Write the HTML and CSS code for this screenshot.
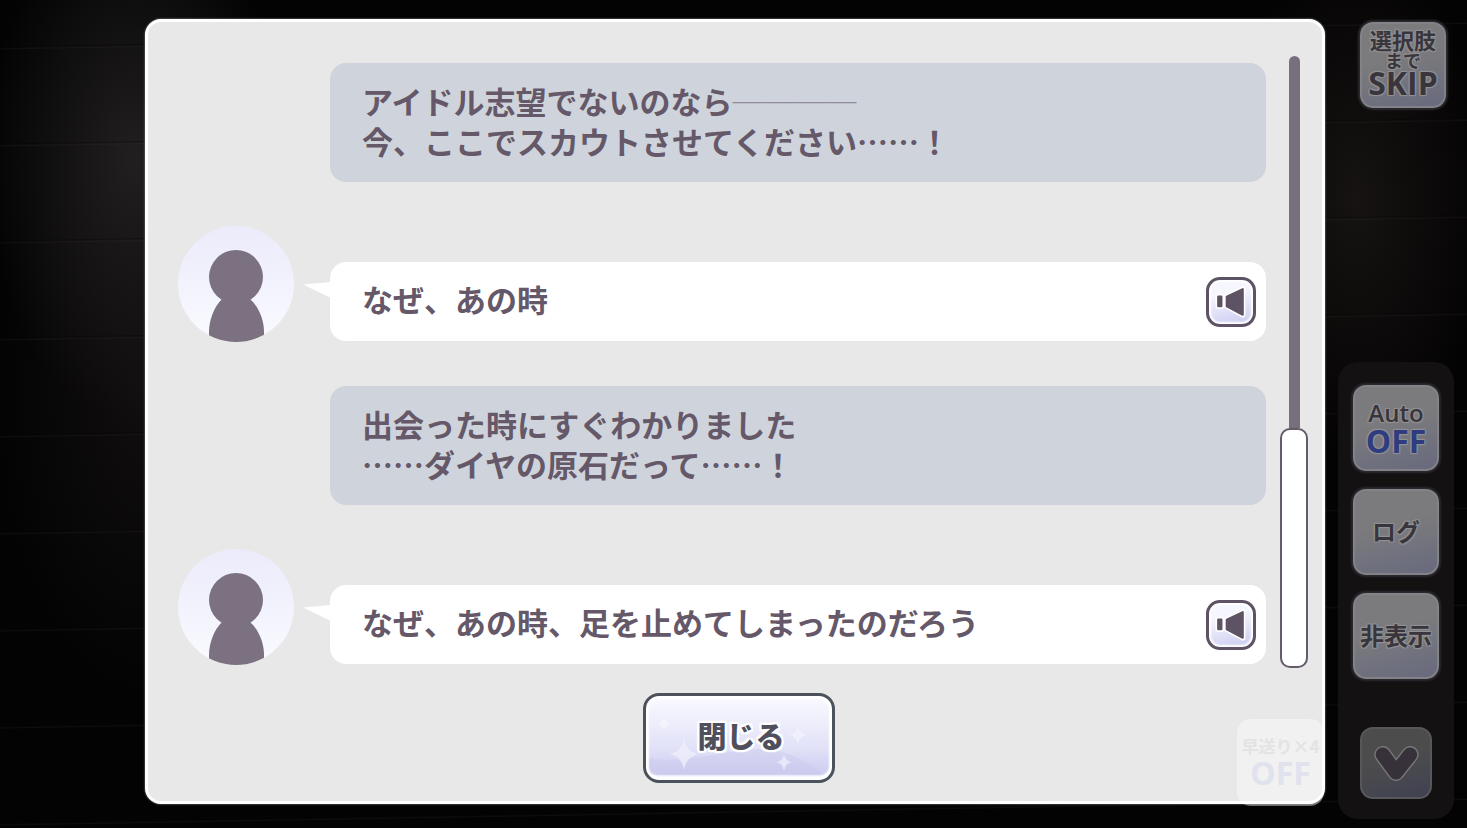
FILE: index.html
```
<!DOCTYPE html>
<html lang="ja">
<head>
  <meta charset="UTF-8" />
  <meta name="viewport" content="width=device-width, initial-scale=1.0">
  <title>ログ</title>
  <link rel="stylesheet" href="styles.css">
</head>
<body>

  <div class="stage">

    <!-- Log window -->
    <main class="panel">
      <div class="log">
        <div class="log-list">
          <div class="narration">
            <p>アイドル志望でないのなら<span class="dash">────</span><br>今、ここでスカウトさせてください……！</p>
          </div>

          <div class="speech">
            <svg class="avatar" viewBox="0 0 116 116" aria-hidden="true">
              <use href="#person" />
            </svg>
            <div class="bubble">
              <p>なぜ、あの時</p>
              <button class="voice" aria-label="音声再生"><svg viewBox="0 0 30 30"><use href="#speaker" /></svg></button>
            </div>
          </div>

          <div class="narration">
            <p>出会った時にすぐわかりました<br>……ダイヤの原石だって……！</p>
          </div>

          <div class="speech">
            <svg class="avatar" viewBox="0 0 116 116" aria-hidden="true">
              <use href="#person" />
            </svg>
            <div class="bubble">
              <p>なぜ、あの時、足を止めてしまったのだろう</p>
              <button class="voice" aria-label="音声再生"><svg viewBox="0 0 30 30"><use href="#speaker" /></svg></button>
            </div>
          </div>
        </div>

        <div class="scrollbar">
          <div class="track"></div>
          <div class="thumb"></div>
        </div>
      </div>

      <div class="footer">
        <button class="close">
          <svg class="sparkles" viewBox="0 0 186 84" preserveAspectRatio="none" aria-hidden="true">
            <path d="M3 62C45 70 90 48 130 54Q158 62 178 79H8Q3 79 3 70Z" fill="#c6c5ec" opacity=".35" />
            <path d="M38 42Q40 55 52 58Q40 61 38 74Q36 61 24 58Q36 55 38 42Z" fill="#eeeefc" opacity=".8" />
            <path d="M138 58Q139 65 146 66Q139 67 138 75Q137 67 130 66Q137 65 138 58Z" fill="#eeeefc" opacity=".8" />
            <path d="M152 30Q153 38 161 39Q153 40 152 49Q151 40 143 39Q151 38 152 30Z" fill="#fff" opacity=".4" />
            <path d="M18 21Q19 27 25 28Q19 29 18 35Q17 29 11 28Q17 27 18 21Z" fill="#fff" opacity=".4" />
          </svg>
          <span>閉じる</span>
        </button>
      </div>

      <button class="fast">
        <span class="fast-label">早送り×4</span>
        <span class="fast-state">OFF</span>
      </button>
    </main>

    <!-- Side buttons -->
    <aside class="side">
      <button class="key skip">
        <span class="skip-top">選択肢</span>
        <span class="skip-mid">まで</span>
        <span class="skip-word">SKIP</span>
      </button>

      <div class="drawer">
        <button class="key">
          <span class="auto">Auto</span>
          <span class="state">OFF</span>
        </button>
        <button class="key"><span class="word">ログ</span></button>
        <button class="key"><span class="word">非表示</span></button>
        <button class="key fold" aria-label="たたむ">
          <svg viewBox="0 0 72 72">
            <path d="M22 27L36 46L51 27" fill="none" stroke="#77777a" stroke-width="18" stroke-linecap="round" stroke-linejoin="round" />
            <path d="M22 27L36 46L51 27" fill="none" stroke="#373239" stroke-width="15" stroke-linecap="round" stroke-linejoin="round" />
          </svg>
        </button>
      </div>
    </aside>

  </div>

  <svg class="defs" width="0" height="0" aria-hidden="true">
    <defs>
      <linearGradient id="sky" x1="0" y1="0" x2="0" y2="1">
        <stop offset="0" stop-color="#ebebfb" />
        <stop offset="1" stop-color="#fafaff" />
      </linearGradient>
      <clipPath id="round"><circle cx="58" cy="58" r="58" /></clipPath>
      <symbol id="person" viewBox="0 0 116 116">
        <circle cx="58" cy="58" r="58" fill="url(#sky)" />
        <g fill="#7b7180" clip-path="url(#round)">
          <circle cx="58" cy="51" r="27" />
          <path d="M44 73H72C81 81 86 94 86 106V116H31V106C31 94 36 81 44 73Z" />
        </g>
      </symbol>
      <symbol id="speaker" viewBox="0 0 30 30">
        <path d="M3 10H6V19H3ZM11 10L26 3V27L11 19Z" fill="#5e5365" stroke="#fff" stroke-width="5" stroke-linejoin="round" />
        <path d="M3 10H6V19H3ZM11 10L26 3V27L11 19Z" fill="#5e5365" stroke="#5e5365" stroke-width="2" stroke-linejoin="round" />
      </symbol>
    </defs>
  </svg>

</body>
</html>
```
FILE: styles.css
```
* {
  box-sizing: border-box;
}

body {
  margin: 0;
  font-family: "Noto Sans CJK JP", sans-serif;
  color: #655868;
  background: #040303;
}

p {
  margin: 0;
}

button {
  font-family: inherit;
  font-weight: bold;
  padding: 0;
  border: none;
  cursor: pointer;
}

.defs {
  position: absolute;
}

.stage {
  display: grid;
  grid-template-columns: 1fr 142px;
  align-items: start;
  min-height: 100vh;
  padding-left: 145px;
  background:
    repeating-linear-gradient(179deg, transparent 0 46px, rgba(0,0,0,0.3) 47px, rgba(80,72,70,0.12) 49px, transparent 50px 97px),
    radial-gradient(ellipse 150px 260px at 135px 160px, #211f20, transparent),
    radial-gradient(ellipse 150px 300px at 145px 400px, #100e0f, transparent),
    radial-gradient(ellipse 130px 260px at calc(100% - 110px) 200px, #161312, transparent),
    #040303;
}

/* Log window */
.panel {
  position: relative;
  margin: 19px 0 24px;
  padding: 34px 14px 18px;
  border: 3px solid #fff;
  border-radius: 16px;
  background: #e8e8e8;
  box-shadow: 0 0 2px #aaa;
}

.log {
  display: grid;
  grid-template-columns: 1fr 28px;
  gap: 14px;
}

.log-list {
  display: flex;
  flex-direction: column;
  gap: 44px;
  padding: 7px 0 3px 16px;
  font-size: 31px;
  font-weight: bold;
  line-height: 40px;
}

.narration,
.bubble {
  padding: 18px 32px 21px;
  border-radius: 16px;
}

.narration {
  margin-left: 152px;
  background: #cfd4dc;
}

.dash {
  font-weight: 400;
  color: #8f8d99;
}

.speech {
  display: flex;
  gap: 36px;
}

.avatar {
  width: 116px;
  height: 116px;
}

.bubble {
  position: relative;
  flex: 1;
  display: flex;
  align-items: center;
  justify-content: space-between;
  height: 79px;
  margin-top: 36px;
  padding: 0 10px 0 32px;
  background: #fff;
}

.bubble p {
  margin-bottom: 6px;
}

.bubble::before {
  content: "";
  position: absolute;
  left: -27px;
  top: 20px;
  width: 28px;
  height: 16px;
  background: #fff;
  clip-path: polygon(0 15%, 100% 0, 100% 100%);
}

.voice {
  display: flex;
  align-items: center;
  justify-content: center;
  width: 50px;
  height: 50px;
  border: 3px solid #5e5365;
  border-radius: 14px;
  background: linear-gradient(165deg, #f6f6ff 30%, #c9c9f0);
  box-shadow: inset 0 0 2px 2px #fff;
}

.voice svg {
  width: 32px;
  height: 32px;
  overflow: visible;
}

.scrollbar {
  display: flex;
  flex-direction: column;
  align-items: center;
}

.track {
  flex: 374;
  width: 11px;
  border-radius: 6px 6px 0 0;
  background: #786f7c;
}

.thumb {
  flex: 238;
  width: 28px;
  border: 2px solid #645a69;
  border-radius: 10px;
  background: #fff;
}

.footer {
  display: flex;
  justify-content: center;
  margin-top: 25px;
  padding-left: 8px;
}

.close {
  position: relative;
  width: 192px;
  height: 90px;
  padding-bottom: 6px;
  border: 3px solid #4b525b;
  border-radius: 16px;
  background: linear-gradient(#fafaff, #e2e2f8 60%, #c9c8ee);
  box-shadow: inset 0 0 2px 3px #fff, inset 0 -5px 2px #f3f6ff;
  color: #50505d;
  font-size: 29px;
  font-weight: 900;
  line-height: 40px;
  text-shadow: 2px 0 1px #fff, -2px 0 1px #fff, 0 2px 1px #fff, 0 -2px 1px #fff, 2px 2px 1px #fff, -2px -2px 1px #fff, 2px -2px 1px #fff, -2px 2px 1px #fff;
}

.close span {
  position: relative;
  padding-left: 4px;
}

.sparkles {
  position: absolute;
  inset: 0;
  width: 100%;
  height: 100%;
}

/* Faded button over the window corner */
.fast {
  position: absolute;
  right: -2px;
  bottom: -5px;
  display: flex;
  flex-direction: column;
  align-items: center;
  justify-content: center;
  width: 87px;
  height: 87px;
  padding-bottom: 4px;
  border-radius: 14px;
  background: rgba(255,255,255,0.4);
  color: #e3e3e5;
}

.fast-label {
  font-size: 17px;
  line-height: 24px;
}

.fast-state {
  color: #e0e2ee;
  font-family: "Open Sans", sans-serif;
  font-size: 32px;
  line-height: 30px;
}

/* Side buttons */
.side {
  display: flex;
  flex-direction: column;
  justify-content: space-between;
  align-items: flex-end;
  align-self: stretch;
  padding: 22px 13px 9px;
}

.drawer {
  display: flex;
  flex-direction: column;
  align-items: center;
  gap: 18px;
  width: 116px;
  padding: 23px 15px 20px;
  border-radius: 20px;
  background: #141113;
}

.key {
  display: flex;
  flex-direction: column;
  align-items: center;
  justify-content: center;
  width: 86px;
  height: 86px;
  padding-bottom: 2px;
  border: 2px solid #828287;
  border-radius: 13px;
  background: linear-gradient(165deg, #7b7b7d 40%, #686a7e);
  box-shadow: 0 0 2px 2px #2d2a30;
  color: #39353c;
  text-shadow: 1px 1px 1px #929294, -1px -1px 1px #929294, 1px -1px 1px #929294, -1px 1px 1px #929294;
}

.skip {
  margin-right: 8px;
  padding-bottom: 6px;
}

.skip-top {
  font-size: 22px;
  line-height: 24px;
}

.skip-mid {
  font-size: 18px;
  line-height: 18px;
}

.skip-word,
.auto,
.state {
  font-family: "Open Sans", sans-serif;
}

.skip-word {
  font-size: 32px;
  line-height: 28px;
}

.auto {
  font-size: 24px;
  font-weight: 600;
  line-height: 28px;
}

.state {
  color: #2f3d80;
  font-size: 32px;
  line-height: 28px;
}

.word {
  font-size: 24px;
  line-height: 28px;
}

.fold {
  width: 72px;
  height: 72px;
  margin-top: 30px;
  padding: 0;
  border-color: #58585b;
  background: linear-gradient(165deg, #4d4c4d 40%, #404252);
  box-shadow: none;
}

.fold svg {
  width: 72px;
  height: 72px;
}
```
